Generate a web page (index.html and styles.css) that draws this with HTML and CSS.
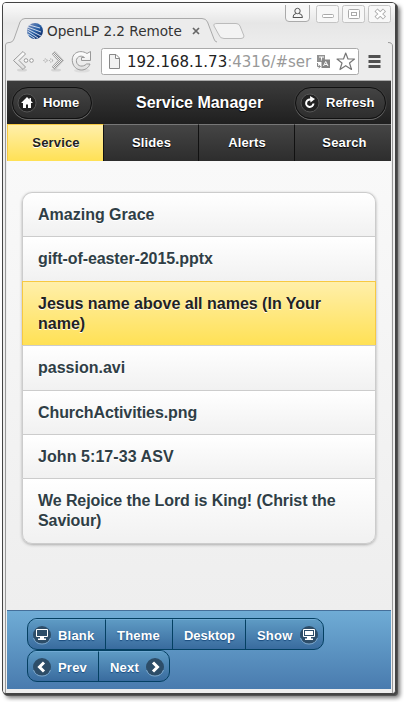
FILE: index.html
```html
<!DOCTYPE html>
<html lang="en">
<head>
<meta charset="utf-8">
<title>OpenLP 2.2 Remote</title>
<link rel="stylesheet" href="styles.css">
</head>
<body>
<div class="window">
  <div class="chrome">
    <svg class="chrome-art" width="392" height="78" viewBox="3 3 392 78" fill="none">
      <defs>
        <linearGradient id="ball" x2="1" y2="1"><stop stop-color="#8795bd"/><stop offset=".5" stop-color="#285fa5"/><stop offset="1" stop-color="#071d57"/></linearGradient>
        <linearGradient id="metal" x2="0" y2="1"><stop stop-color="#fff"/><stop offset="1" stop-color="#ddd"/></linearGradient>
        <pattern id="dots" width="2" height="2" patternUnits="userSpaceOnUse"><rect width="1" height="1" fill="#999"/><rect x="1" y="1" width="1" height="1" fill="#999"/></pattern>
      </defs>
      <path d="M5.5 82V45Q5.5 42.5 9 42.5H10Q13 42 14 39L20 22Q21.5 18.500 25 18.500H202Q206 18.500 207.500 22L214 39Q215 42.500 219 42.500H389Q392.500 42.500 392.500 46V82Z" fill="#ececec"/>
      <path d="M5.5 82V45Q5.5 42.5 9 42.5H10Q13 42 14 39L20 22Q21.5 18.500 25 18.500H202Q206 18.500 207.500 22L214 39Q215 42 217 42" stroke="#aaa"/>
      <path d="M388 42.500Q392.500 42.500 392.500 46V82" stroke="#999"/>
      <path d="M217 23.500H236Q239 23.500 240 26L244 36Q244 38.500 241 38.500H224Q220 38.500 219 35L214 26Q213 23.500 217 23.500Z" fill="#f3f3f3" stroke="#bbb"/>
      <circle cx="35" cy="31" r="8" fill="url(#ball)"/>
      <path d="M27.500 27L41 32M27.300 29L41 36M27.300 31L38 38M28 34L35 38.500M29 25L40 28" stroke="#dfe6f3" stroke-width=".9"/>
      <path d="M193 28L199 34M199 28L193 34" stroke="#666" stroke-width="1.700"/>
      <path d="M285.500 5V18Q285.500 21.500 289 21.500H306Q309.500 21.500 309.500 18V5" fill="#f6f6f6" stroke="#aaa"/>
      <circle cx="297.500" cy="11" r="2.700" stroke="#555"/><path d="M296 13.500Q293 14 293 17.500H302.500Q302.500 14 299 13.500" stroke="#555"/>
      <g fill="#f7f7f7" stroke="#c4c4c4"><rect x="316.500" y="5.500" width="22" height="17" rx="2"/><rect x="342.500" y="5.500" width="22" height="17" rx="2"/><rect x="368.500" y="5.500" width="22" height="17" rx="2"/></g>
      <g stroke="#aaa" fill="#fff"><rect x="322.500" y="14.500" width="11" height="3" rx="1"/><rect x="348.500" y="9.500" width="11" height="9" rx="1"/><rect x="351.500" y="12.500" width="5" height="3"/></g>
      <path d="M376 10L384.500 18M384.500 10L376 18" stroke="#aaa" stroke-width="4.400"/><path d="M376.500 10.500L384 17.500M384 10.500L376.500 17.500" stroke="#fff" stroke-width="2.400"/>
      <ellipse cx="22" cy="70" rx="5" ry="1.500" fill="#d5d5d5"/><ellipse cx="56" cy="70" rx="5" ry="1.500" fill="#d5d5d5"/><ellipse cx="82" cy="70.500" rx="8" ry="2" fill="#ddd"/>
      <path d="M23 51.500L13.500 60.500L23 69.500L25.500 67L19 60.500L25.500 54Z" fill="url(#metal)" stroke="#999"/><circle cx="26" cy="60.500" r="1.800" fill="#fff" stroke="#999"/><circle cx="31.500" cy="60.500" r="1.800" fill="#fff" stroke="#999"/>
      <path d="M55 51.500L63.500 60.500L55 69.500L52 67L58 60.500L52 54Z" fill="url(#dots)" stroke="#aaa" stroke-width=".7"/><circle cx="45.500" cy="60.500" r="1.600" stroke="#999" stroke-dasharray="1 1"/><circle cx="51" cy="60.500" r="1.600" stroke="#999" stroke-dasharray="1 1"/>
      <path d="M90.500 51.500V60.500H81.500V57.500H84.500C80 54 75.500 58 76.500 62C77.500 66.500 83 67.500 86.500 64H90C87 72 76 72 73 64C69.500 54 79 48.500 87 53.500Z" fill="url(#metal)" stroke="#999"/>
      <rect x="101.500" y="48.500" width="257" height="26" rx="2" fill="#fff" stroke="#aaa"/>
      <path d="M109.500 54.500H116L119.500 58V68.500H109.500ZM115.500 54.500V58.500H119.500" fill="#f2f2f2" stroke="#888"/>
      <path d="M317 55H325V62H317Z" fill="#929292"/><path d="M319 57H324M321.500 57V61" stroke="#fff"/><path d="M321.500 59.500H330V68H321.500Z" fill="#858585"/><path d="M323.500 66L325.700 61.500L328 66M324.500 64.500H327" stroke="#fff"/><path d="M317.500 63V66.500H320M318.500 65L320.500 66.500L318.500 68" stroke="#888"/>
      <path d="M345.700 53L348 59H354.500L349.500 63L351.500 69.500L345.700 65.700L340 69.500L342 63L337 59H343.500Z" fill="#fff" stroke="#777" stroke-width="1.200" stroke-linejoin="round"/>
      <path d="M368.500 56.500H380.500M368.500 61.500H380.500M368.500 66.500H380.500" stroke="#505050" stroke-width="3" stroke-linecap="butt"/>
    </svg>
    <div class="tab-title">OpenLP 2.2 Remote</div>
    <div class="address"><span>192.168.1.73</span>:4316/#ser</div>
  </div>
  <div class="page">
    <header class="bar">
      <a class="pill home"><svg width="20" height="20" viewBox="0 0 20 20"><circle cx="10" cy="10" r="9" fill="#222" stroke="#555"/><path d="M10 4L4 10H6V15H9V11.500H11V15H14V10H16L14 8V5H12.500V6.500Z" fill="#fff"/></svg><span>Home</span></a>
      <h1>Service Manager</h1>
      <a class="pill refresh"><svg width="20" height="20" viewBox="0 0 20 20"><circle cx="10" cy="10" r="9" fill="#222" stroke="#555"/><path d="M13.500 10.500A3.700 3.700 0 1 1 10 6.500H11" fill="none" stroke="#fff" stroke-width="2"/><path d="M10 3L15 6L10.500 9.500Z" fill="#fff"/></svg><span>Refresh</span></a>
    </header>
    <nav class="tabs"><a class="active">Service</a><a>Slides</a><a>Alerts</a><a>Search</a></nav>
    <main>
      <ul class="items">
        <li>Amazing Grace</li>
        <li class="r45 tight">gift-of-easter-2015.pptx</li>
        <li class="selected">Jesus name above all names (In Your<br>name)</li>
        <li class="r45">passion.avi</li>
        <li class="tight">ChurchActivities.png</li>
        <li class="loose">John 5:17-33 ASV</li>
        <li class="last tight">We Rejoice the Lord is King! (Christ the<br>Saviour)</li>
      </ul>
    </main>
    <footer>
      <div class="group">
        <a class="blank"><svg width="20" height="20" viewBox="0 0 20 20"><circle cx="10" cy="10" r="9" fill="#2d4d68"/><path d="M1.500 13A9 9 0 0 0 18.500 13" fill="none" stroke="#7fa8cb"/><path d="M4.500 4.500H15.500V11.500H4.500Z" fill="none" stroke="#fff"/><path d="M8 12H12V13.500H14V15H6V13.500H8Z" fill="#fff"/></svg><span>Blank</span></a>
        <a class="theme">Theme</a>
        <a class="desktop">Desktop</a>
        <a class="show"><span>Show</span><svg width="20" height="20" viewBox="0 0 20 20"><circle cx="10" cy="10" r="9" fill="#2d4d68"/><path d="M1.500 13A9 9 0 0 0 18.500 13" fill="none" stroke="#7fa8cb"/><path d="M4.500 4.500H15.500V11.500H4.500Z" fill="none" stroke="#fff"/><path d="M6 6H14V10H6ZM8 12H12V13.500H14V15H6V13.500H8Z" fill="#fff"/></svg></a>
      </div>
      <div class="group second">
        <a class="prev"><svg width="20" height="20" viewBox="0 0 20 20"><circle cx="10" cy="10" r="9" fill="#2d4d68"/><path d="M1.500 13A9 9 0 0 0 18.500 13" fill="none" stroke="#7fa8cb"/><path d="M12 5.500L7.500 10L12 14.500" fill="none" stroke="#fff" stroke-width="3"/></svg><span>Prev</span></a>
        <a class="next"><span>Next</span><svg width="20" height="20" viewBox="0 0 20 20"><circle cx="10" cy="10" r="9" fill="#2d4d68"/><path d="M1.500 13A9 9 0 0 0 18.500 13" fill="none" stroke="#7fa8cb"/><path d="M8 5.500L12.500 10L8 14.500" fill="none" stroke="#fff" stroke-width="3"/></svg></a>
      </div>
    </footer>
  </div>
</div>
</body>
</html>
```
FILE: styles.css
```css
* { box-sizing: border-box; }
body { margin: 0; height: 702px; padding: 2px; overflow: hidden; background: #fff; font-family: "Liberation Sans", Arial, sans-serif; }
svg { display: block; flex: none; }
.window { width: 394px; height: 692px; border: 1px solid #444; border-radius: 4px; background: #ececec; box-shadow: 1px 1px 0 #444, 2px 2px 0 #555, 4px 4px 4px #777; }
.chrome { position: relative; height: 77px; background: linear-gradient(#fcfcfc, #e6e6e6 20px, #ececec 40px); border-radius: 3px 3px 0 0; }
.chrome-art { position: absolute; left: 0; top: 0; }
.tab-title { position: relative; padding: 18px 0 0 44px; font: 13.6px/20px "DejaVu Sans", sans-serif; color: #333; white-space: nowrap; }
.address { position: relative; padding: 10px 0 0 124px; font: 15px/22px "DejaVu Sans", sans-serif; color: #999; white-space: nowrap; }
.address span { color: #222; }
.page { position: relative; display: flex; flex-direction: column; width: 392px; height: 613px; padding: 0 4px 4px; border-radius: 0 0 3px 3px; background: linear-gradient(90deg, #eee 2px, #999 2px, #999 3px, #eee 3px, #eee 389px, #999 389px, #999 390px, #eee 390px); }
.bar { display: flex; flex: none; justify-content: space-between; align-items: center; height: 44px; padding: 0 5px; border-top: 1px solid #aaa; background: linear-gradient(#3c3c3c, #1f1f1f); color: #fff; text-shadow: 0 1px 1px #000; }
.bar h1 { margin: 0; padding-left: 44px; flex: 1; font-size: 16px; line-height: 22px; white-space: nowrap; }
.pill { display: flex; align-items: center; height: 32px; border: 1px solid #111; border-radius: 17px; padding: 0 12px 0 4px; gap: 6px; background: linear-gradient(#444, #2d2d2d); box-shadow: 0 1px 0 #666, 0 0 0 1px #3b3b3b; font-size: 13px; font-weight: bold; }
.home { width: 80px; }
.refresh { width: 91px; }
.tabs { display: grid; grid-template-columns: 97px 95px 96px 96px; flex: none; height: 37px; text-align: center; font-size: 13px; font-weight: bold; letter-spacing: .15px; color: #fff; text-shadow: 0 1px 1px #000; }
.tabs a { padding-left: 1px; border-top: 1px solid #777; border-right: 1px solid #111; border-bottom: 1px solid #222; background: linear-gradient(#454545, #2d2d2d); line-height: 36px; }
.tabs a:last-child { border-right: 0; padding-left: 3px; }
.tabs .active { color: #222; border-top-color: #f7c942; border-left: 1px solid #f7c942; background: linear-gradient(#ffefaa, #ffe155); text-shadow: 0 1px 0 #fff; }
main { flex: 1; padding: 31px 15px 0; background: linear-gradient(#f9f9f9, #eee); }
.items { list-style: none; margin: 0; padding: 0; border-radius: 10px; box-shadow: 0 1px 3px #aaa; font-weight: bold; font-size: 16px; line-height: 20px; color: #2f3e46; text-shadow: 0 1px 0 #fff; }
.items li { height: 44px; padding: 12px 15px 0; border: 1px solid #ccc; border-bottom: 0; background: linear-gradient(#fff, #f1f1f1); white-space: nowrap; }
.items .r45 { height: 45px; }
.items .tight { letter-spacing: -.09px; }
.items .loose { letter-spacing: .07px; }
.items .selected { height: 64px; border-color: #f7c942; color: #222; background: linear-gradient(#ffefaa, #ffe155); }
.items li:first-child { border-radius: 10px 10px 0 0; }
.items .last { height: 66px; border-bottom: 1px solid #ccc; border-radius: 0 0 10px 10px; }
footer { flex: none; height: 79px; padding: 7px 20px 0; border-top: 1px solid #456f9a; background: linear-gradient(#6facd5, #497bae); }
.group { display: flex; width: 297px; height: 32px; border: 1px solid #044062; border-radius: 10px; overflow: hidden; background: linear-gradient(#5f9cc5, #396b9e); color: #fff; font-size: 13px; font-weight: bold; letter-spacing: .2px; line-height: 33px; text-shadow: 0 1px 1px #194b7e; }
.group a { display: flex; align-items: center; border-right: 1px solid #044062; border-top: 1px solid #71aad3; padding-top: 2px; }
.group svg { margin-top: -2px; }
.group a:last-child { border-right: 0; }
.group .blank, .group .prev { width: 78px; padding-left: 4px; gap: 6px; }
.group .theme { width: 67px; padding-left: 11px; }
.group .desktop { width: 73px; padding-left: 11px; letter-spacing: -.05px; }
.group .show { width: 77px; padding-left: 11px; padding-right: 4px; justify-content: space-between; }
.second { width: 143px; }
.group .prev { width: 71px; }
.group .next { width: 70px; padding-left: 11px; padding-right: 4px; justify-content: space-between; }
```
